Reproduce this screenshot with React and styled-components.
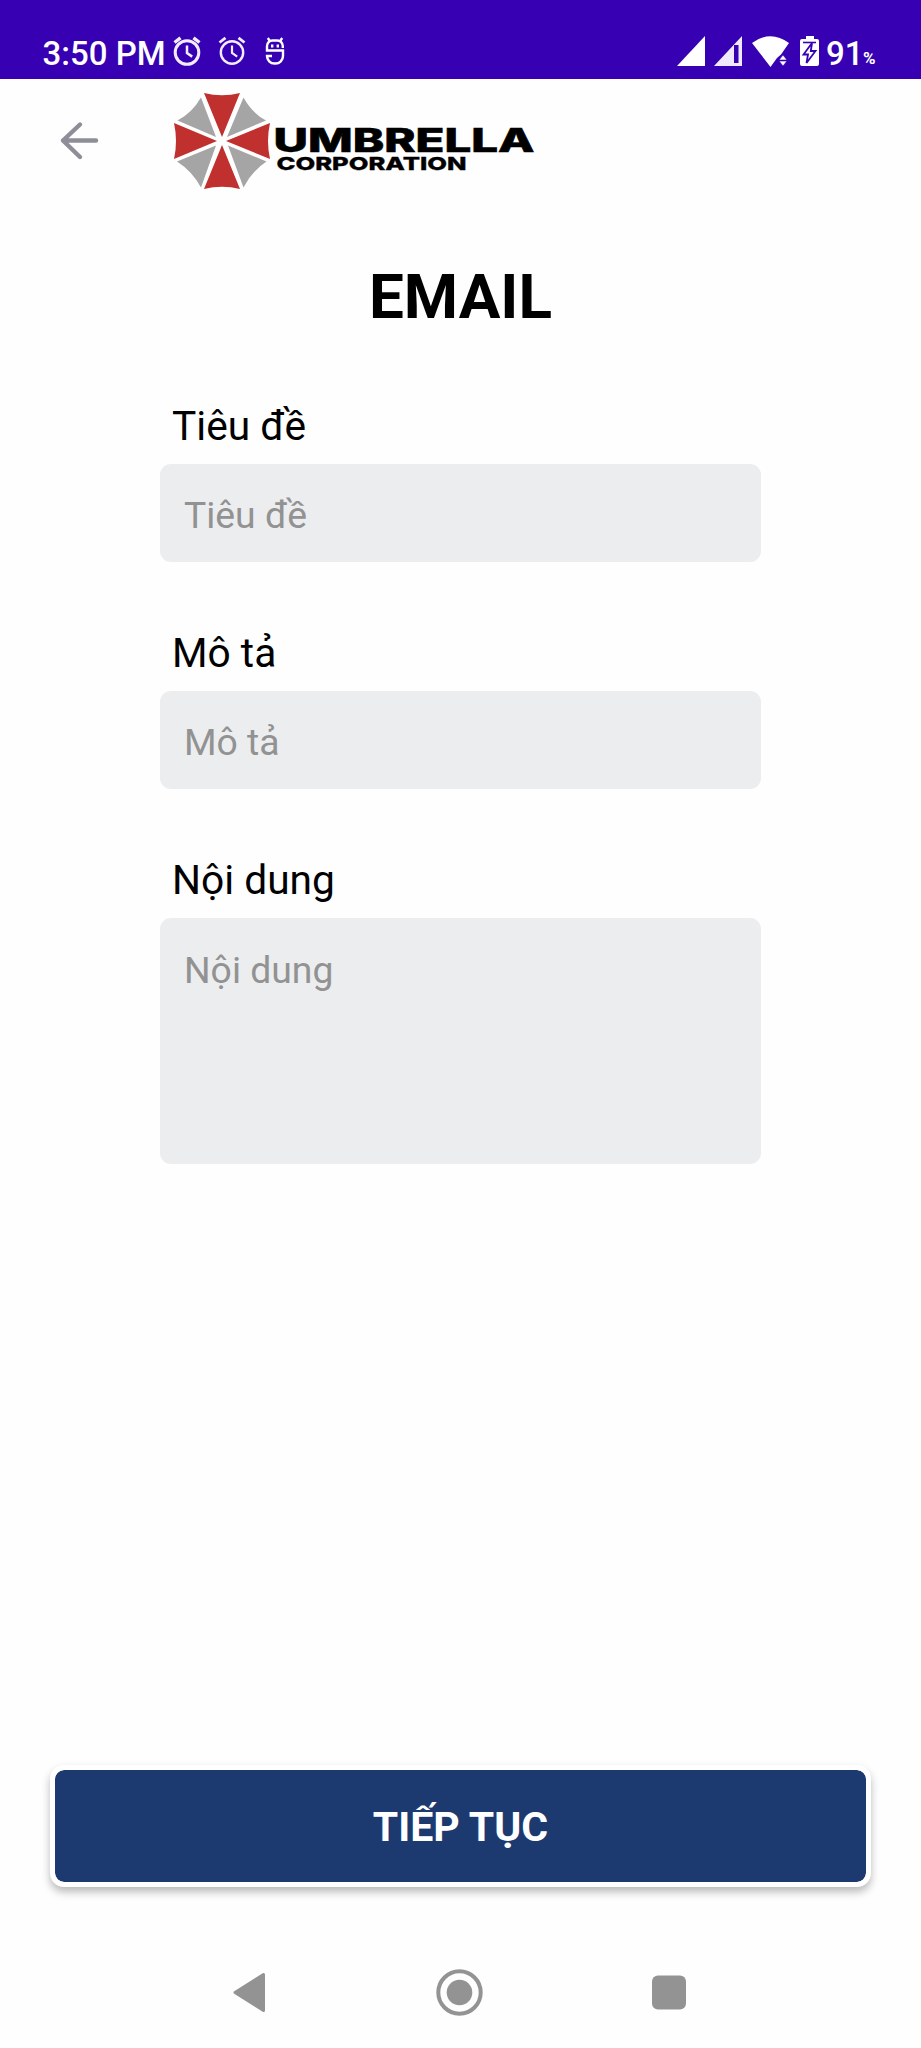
import React from "react";
import styled, { createGlobalStyle } from "styled-components";

const GlobalStyle = createGlobalStyle`
  *, *::before, *::after { box-sizing: border-box; }
  body { margin: 0; background: #fefefe; }
`;

const Screen = styled.div`
  width: 921px;
  height: 2048px;
  display: flex;
  flex-direction: column;
  overflow: hidden;
  background: #fefefe;
  color: #000;
  font-family: Roboto, "Noto Sans", sans-serif;
`;

const StatusBar = styled.header`
  height: 79px;
  flex: none;
  display: flex;
  justify-content: space-between;
  align-items: flex-start;
  padding: 33px 43px 0 42px;
  background: #3700b3;
  color: #fff;
`;

const StatusGroup = styled.div`
  display: flex;
  align-items: flex-start;
  height: 40px;
`;

const StatusText = styled.span`
  width: ${(p) => p.$width}px;
  padding-left: ${(p) => p.$indent || 0}px;
  font-size: 33px;
  line-height: 42px;
  font-weight: 500;
  white-space: nowrap;
`;

const PercentSign = styled.span`
  width: 15px;
  font-size: 17px;
  font-weight: 700;
  line-height: 22px;
  padding-top: 14px;
`;

const StatusIcon = styled.svg`
  display: block;
  flex: none;
  margin-left: ${(p) => p.$gap || 0}px;
`;

const AppBar = styled.div`
  height: 123px;
  flex: none;
  display: flex;
  align-items: flex-start;
  padding: 11px 0 0 57px;
`;

const BackButton = styled.button`
  width: 44px;
  height: 44px;
  margin: 30px 69px 0 0;
  padding: 0;
  border: 0;
  background: none;
`;

const Title = styled.h1`
  margin: 59px 0 0;
  text-align: center;
  font-size: 62px;
  line-height: 72px;
  font-weight: 700;
`;

const Form = styled.form`
  flex: 1;
  display: flex;
  flex-direction: column;
  padding-top: 69px;
`;

const Fields = styled.div`
  width: 601px;
  margin-left: 160px;
  display: flex;
  flex-direction: column;
  gap: 67px;
`;

const Field = styled.label`
  display: flex;
  flex-direction: column;
  gap: 14px;
`;

const LabelText = styled.span`
  padding-left: 12px;
  font-size: 40.7px;
  line-height: 48px;
`;

const Input = styled.input`
  width: 100%;
  height: ${(p) => p.$height}px;
  padding: ${(p) => p.$pad || "4px 24px 0"};
  border: 0;
  border-radius: 11px;
  outline: 0;
  resize: none;
  background: #ecedef;
  font-family: inherit;
  font-size: 37.3px;
  line-height: 44px;
  color: #000;
  &::placeholder { color: #929292; opacity: 1; }
`;

const SubmitButton = styled.button`
  width: 821px;
  height: 122px;
  margin: auto 0 0 50px;
  padding: 2px 0 0;
  border: 5px solid #fff;
  border-radius: 14px;
  background: #1d3a70;
  background-clip: padding-box;
  color: #fff;
  font-family: inherit;
  font-size: 41px;
  font-weight: 700;
  box-shadow: 0 5px 8px rgba(0, 0, 0, 0.27);
`;

const NavBar = styled.nav`
  height: 161px;
  flex: none;
  display: flex;
  justify-content: space-between;
  padding: 82px 229px 0 228px;
`;

const NavButton = styled.button`
  width: 48px;
  height: 48px;
  padding: 0;
  border: 0;
  background: none;
  svg { display: block; }
`;

function AlarmIcon({ gap, thick }) {
  return (
    <StatusIcon $gap={gap} width="28" height="34" viewBox="0 0 28 34" fill="none" stroke="#f3ecff">
      <circle cx="14" cy="19.5" r={thick ? 11.8 : 11.2} strokeWidth={thick ? 3 : 2.4} />
      <path d="M14 12.500V20l5.200 3.600" strokeWidth={thick ? 2.5 : 2.2} />
      <path d="M1.500 9.500 7.500 4.800M26.500 9.500l-6-4.700" strokeWidth={thick ? 3.400 : 2.800} />
    </StatusIcon>
  );
}

function RobotIcon() {
  return (
    <StatusIcon $gap={19} width="20" height="34" viewBox="0 0 20 34" fill="none" stroke="#fff" strokeWidth="2.4">
      <path d="M17.800 15v-2a5.500 5.500 0 0 0-5.500-5.500H7.500A5.500 5.500 0 0 0 2 13v4.500h16V23a7.500 7.500 0 0 1-7.500 7.500h-1A7.500 7.500 0 0 1 2 23h5" />
      <path d="m2.800 5 2.400 3.500M17.200 5l-2.400 3.500" />
      <path d="M7.200 11.500v3M12.800 11.500v3" />
    </StatusIcon>
  );
}

function UmbrellaLogo() {
  return (
    <svg width="370" height="106" viewBox="170 90 370 106" role="img" aria-label="Umbrella Corporation">
      <g fill="#bf302f">
        <path d="M204 93q18 4.500 36 0L222 137Z" />
        <path d="M204 189q18-4.500 36 0L222 145Z" />
        <path d="M174 123q4 18 0 36L217 141Z" />
        <path d="M270 123q-4 18 0 36L226 141Z" />
      </g>
      <g fill="#a5a5a5">
        <path d="M201 97.500Q192 113 177.500 120.500L216 137Z" />
        <path d="M243.500 97.500Q252 113 266 120.500L227 137Z" />
        <path d="M201 187.500Q192 171 177 161.500L216 145.500Z" />
        <path d="M243.500 187.500Q252 171 266.500 161.500L228 145.500Z" />
      </g>
      <g fill="#000" stroke="#000" fontFamily="Inter, sans-serif" fontWeight="800">
        <text x="273.500" y="151.700" fontSize="32.500" strokeWidth="0.600" textLength="261" lengthAdjust="spacingAndGlyphs">UMBRELLA</text>
        <text x="276.500" y="170" fontSize="18" strokeWidth="0.300" textLength="190" lengthAdjust="spacingAndGlyphs">CORPORATION</text>
      </g>
    </svg>
  );
}

export default function App() {
  return (
    <>
      <GlobalStyle />
      <Screen>
        <StatusBar>
          <StatusGroup>
            <StatusText $width={131} $indent={0.5}>3:50 PM</StatusText>
            <AlarmIcon thick />
            <AlarmIcon gap={17} />
            <RobotIcon />
          </StatusGroup>
          <StatusGroup>
            <StatusIcon width="29" height="34" viewBox="0 0 29 34">
              <path d="M0 33 28 3v30Z" fill="#fff" />
            </StatusIcon>
            <StatusIcon $gap={8} width="29" height="34" viewBox="0 0 29 34">
              <path fillRule="evenodd" d="M0 33 28 3v30ZM20 12h4.500v18H20Z" fill="#f0e8fc" />
            </StatusIcon>
            <StatusIcon $gap={9} width="38" height="36" viewBox="0 0 38 36" fill="#fff">
              <path d="M0 10Q18.500-3.500 37 10L29 21.500 25 25 18.500 34Z" />
              <path d="m31 22 4 5h-8ZM31 33l-4-5h8Z" stroke="#3700b3" strokeWidth="0.600" />
            </StatusIcon>
            <StatusIcon $gap={10} width="19" height="34" viewBox="0 0 19 34">
              <path d="M6 3h8v3h3q2 0 2 2v23q0 2-2 2H2q-2 0-2-2V8q0-2 2-2h4Z" fill="#fff" />
              <path d="M3 9.500h13" stroke="#3700b3" strokeWidth="1.600" />
              <path d="M12 10 3.500 21.500H8L6.500 30 15.500 18h-4.700L12 10Z" fill="#fff" stroke="#3700b3" strokeWidth="1.800" />
            </StatusIcon>
            <StatusText $width={44} $indent={7}>91</StatusText>
            <PercentSign>%</PercentSign>
          </StatusGroup>
        </StatusBar>

        <AppBar>
          <BackButton type="button" aria-label="Back">
            <svg width="44" height="44" viewBox="0 0 44 44" fill="none" stroke="#8e8e99" strokeWidth="4.400" strokeLinecap="round" strokeLinejoin="round">
              <path d="M39 20.500H6M23 4.500 6 20.500l17 16.500" />
            </svg>
          </BackButton>
          <UmbrellaLogo />
        </AppBar>

        <Title>EMAIL</Title>

        <Form>
          <Fields>
            <Field>
              <LabelText>Tiêu đề</LabelText>
              <Input $height={98} placeholder="Tiêu đề" />
            </Field>
            <Field>
              <LabelText>Mô tả</LabelText>
              <Input $height={98} placeholder="Mô tả" />
            </Field>
            <Field>
              <LabelText>Nội dung</LabelText>
              <Input as="textarea" $height={246} $pad="30px 24px" placeholder="Nội dung" />
            </Field>
          </Fields>
          <SubmitButton type="button">TIẾP TỤC</SubmitButton>
        </Form>

        <NavBar>
          <NavButton aria-label="Back">
            <svg width="48" height="48" viewBox="0 0 48 48" fill="#939393" stroke="#939393" strokeWidth="3" strokeLinejoin="round">
              <path d="M7 23.500 35.500 5.500v36Z" />
            </svg>
          </NavButton>
          <NavButton aria-label="Home">
            <svg width="48" height="48" viewBox="0 0 48 48">
              <circle cx="23.500" cy="23.500" r="21.200" fill="none" stroke="#939393" strokeWidth="4" />
              <circle cx="23.500" cy="23.500" r="12.800" fill="#939393" />
            </svg>
          </NavButton>
          <NavButton aria-label="Recent apps">
            <svg width="48" height="48" viewBox="0 0 48 48">
              <rect x="8" y="6.500" width="34" height="34" rx="6" fill="#939393" />
            </svg>
          </NavButton>
        </NavBar>
      </Screen>
    </>
  );
}
